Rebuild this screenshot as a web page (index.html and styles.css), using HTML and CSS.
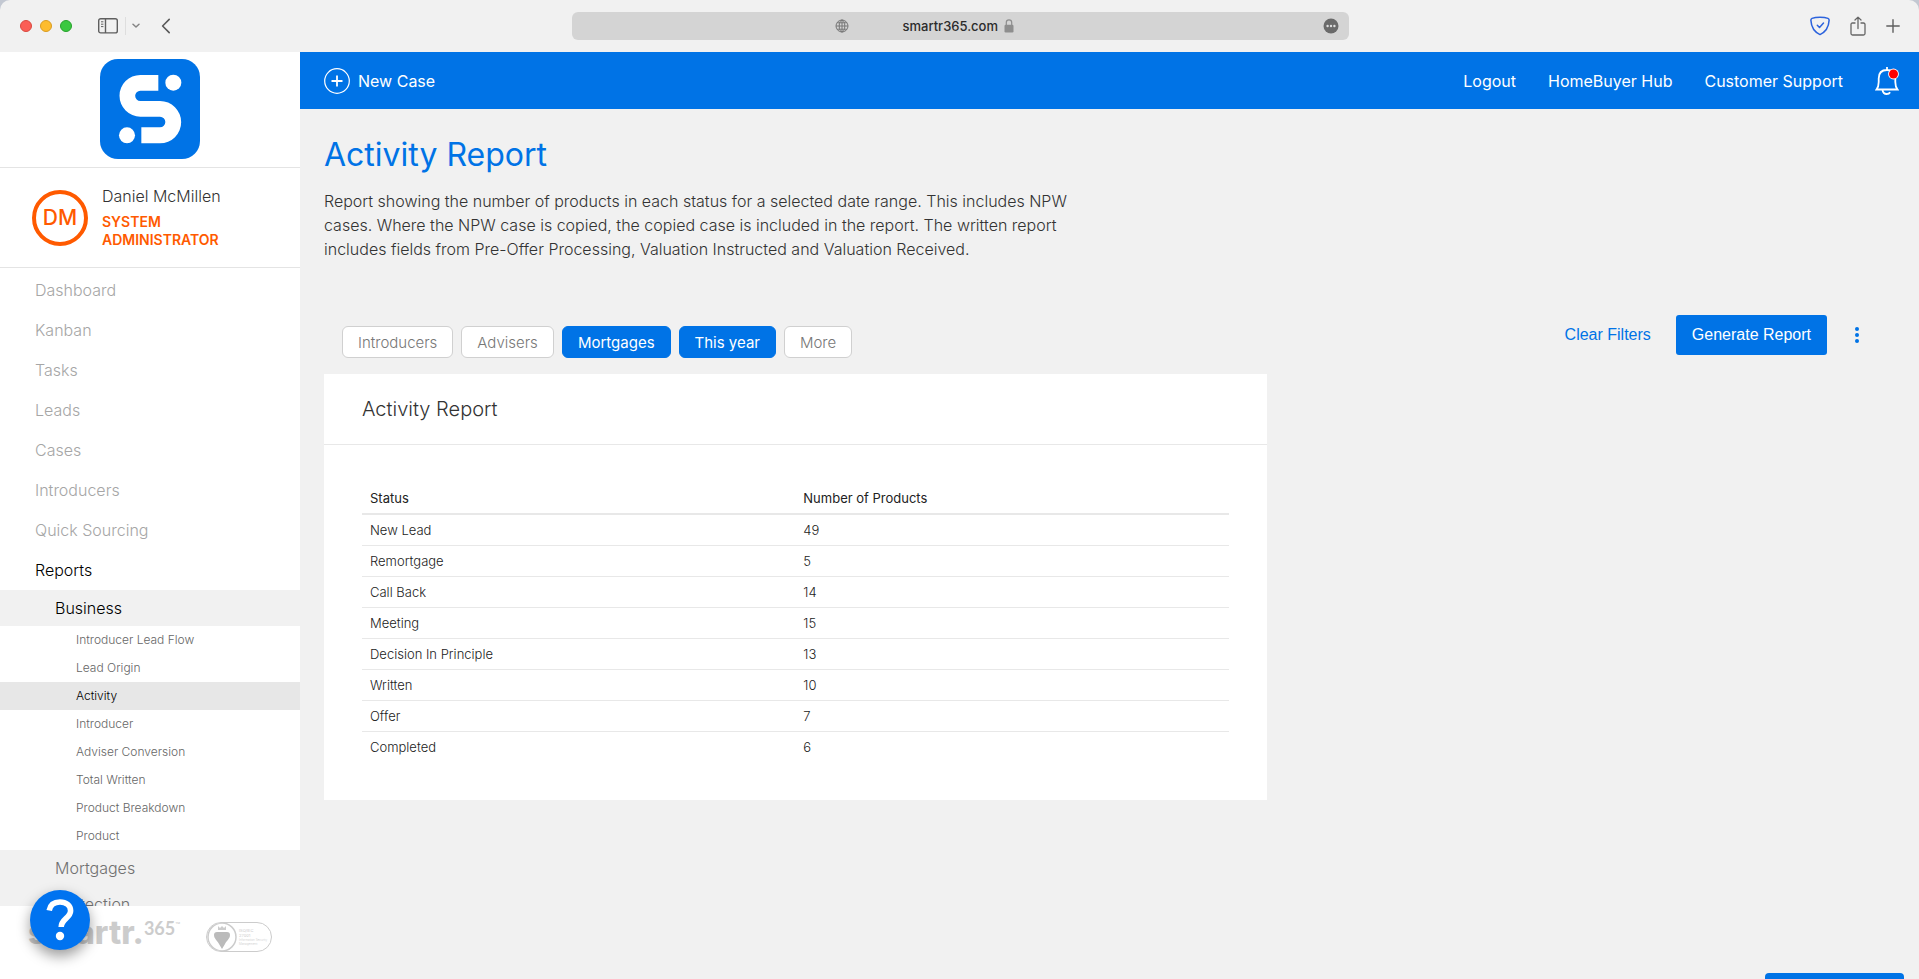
FILE: index.html
```html
<!DOCTYPE html>
<html lang="en">
<head>
<meta charset="utf-8">
<title>Activity Report</title>
<link rel="stylesheet" href="styles.css">
</head>
<body>
<div class="window">
  <div class="chrome">
    <div class="chrome-side">
      <span class="light light-red"></span>
      <span class="light light-yellow"></span>
      <span class="light light-green"></span>
      <button class="chrome-btn sidebar-btn" aria-label="Show sidebar">
        <svg width="20" height="16" viewBox="0 0 20 16" fill="none" stroke="#5f5f5f" stroke-width="1.4"><rect x=".7" y=".7" width="18.6" height="14.2" rx="2"/><path d="M7.5 1v14"/><path d="M3 3.8h2.4M3 6.2h2.4M3 8.6h2.4" stroke-width="1"/></svg>
      </button>
      <span class="chrome-divider"></span>
      <button class="chrome-btn" aria-label="Tab groups">
        <svg width="8" height="6" viewBox="0 0 8 6" fill="none" stroke="#858585" stroke-width="1.5" stroke-linecap="round" stroke-linejoin="round"><path d="M1 1.2l3 2.8 3-2.8"/></svg>
      </button>
      <button class="chrome-btn back-btn" aria-label="Back">
        <svg width="10" height="16" viewBox="0 0 10 16" fill="none" stroke="#5a5a5a" stroke-width="1.6" stroke-linecap="round" stroke-linejoin="round"><path d="M8.2 1.4L1.6 8l6.6 6.6"/></svg>
      </button>
    </div>
    <div class="address">
      <svg class="globe" width="14" height="14" viewBox="0 0 14 14" fill="none" stroke="#777" stroke-width="1"><circle cx="7" cy="7" r="6"/><ellipse cx="7" cy="7" rx="2.8" ry="6"/><path d="M1 7h12M7 1v12M2 3.8h10M2 10.2h10"/></svg>
      <span class="host">smartr365.com
        <svg width="10" height="14" viewBox="0 0 10 14"><path d="M2.3 6V3.6a2.7 2.7 0 0 1 5.4 0V6" fill="none" stroke="#8e8e8e" stroke-width="1.2"/><rect x=".5" y="5.8" width="9" height="7.6" rx="1.2" fill="#8e8e8e"/></svg>
      </span>
      <svg class="more-dots" width="16" height="16" viewBox="0 0 16 16"><circle cx="8" cy="8" r="7.5" fill="#6a6a6a"/><g fill="#ddd"><circle cx="4.6" cy="8" r="1.2"/><circle cx="8" cy="8" r="1.2"/><circle cx="11.4" cy="8" r="1.2"/></g></svg>
    </div>
    <div class="chrome-side chrome-right">
      <button class="chrome-btn" aria-label="Privacy">
        <svg width="20" height="20" viewBox="0 0 20 20" fill="none" stroke="#2c63dd" stroke-width="1.5" stroke-linecap="round" stroke-linejoin="round"><path d="M10 1.2c3 0 6 .4 8 1.2 1 .4 1.2.8 1.1 2C18.700 11.500 15.500 16 10 18.600 4.500 16 1.300 11.500.9 4.400.8 3.200 1 2.800 2 2.400 4 1.600 7 1.200 10 1.200z"/><path d="M7.300 9.300l2.200 2.200 4-4.400"/></svg>
      </button>
      <button class="chrome-btn" aria-label="Share">
        <svg width="16" height="20" viewBox="0 0 16 20" fill="none" stroke="#666" stroke-width="1.3" stroke-linecap="round" stroke-linejoin="round"><path d="M5 7H2.500Q1 7 1 8.500v9Q1 19 2.500 19h11q1.500 0 1.500-1.500v-9Q15 7 13.500 7H11M8 12.500V1.200M5 4l3-2.900L11 4"/></svg>
      </button>
      <button class="chrome-btn" aria-label="New tab">
        <svg width="14" height="14" viewBox="0 0 14 14" fill="none" stroke="#5f5f5f" stroke-width="1.4" stroke-linecap="round"><path d="M7 .8v12.400M.8 7h12.400"/></svg>
      </button>
    </div>
  </div>

  <div class="app">
    <aside class="sidebar">
      <div class="brand">
        <svg width="100" height="100" viewBox="0 0 300 300" role="img" aria-label="Smartr365"><rect width="300" height="300" rx="54" fill="#0073e6"/><path fill="#fff" d="M175 48H121A62.500 62.500 0 0 0 121 173H180A16 16 0 0 1 180 205H124V253H180A63.500 63.500 0 0 0 180 126H121A15.500 15.500 0 0 1 121 95H175Z"/><circle cx="220" cy="71" r="24" fill="#fff"/><circle cx="81" cy="229" r="24" fill="#fff"/></svg>
      </div>
      <div class="user">
        <span class="avatar">DM</span>
        <div>
          <div class="user-name">Daniel McMillen</div>
          <div class="user-role">SYSTEM ADMINISTRATOR</div>
        </div>
      </div>
      <nav class="nav">
        <a class="nav-item" href="#">Dashboard</a>
        <a class="nav-item" href="#">Kanban</a>
        <a class="nav-item" href="#">Tasks</a>
        <a class="nav-item" href="#">Leads</a>
        <a class="nav-item" href="#">Cases</a>
        <a class="nav-item" href="#">Introducers</a>
        <a class="nav-item" href="#">Quick Sourcing</a>
        <a class="nav-item current" href="#">Reports</a>
        <a class="nav-group current" href="#">Business</a>
        <a class="nav-sub" href="#">Introducer Lead Flow</a>
        <a class="nav-sub" href="#">Lead Origin</a>
        <a class="nav-sub active" href="#">Activity</a>
        <a class="nav-sub" href="#">Introducer</a>
        <a class="nav-sub" href="#">Adviser Conversion</a>
        <a class="nav-sub" href="#">Total Written</a>
        <a class="nav-sub" href="#">Product Breakdown</a>
        <a class="nav-sub" href="#">Product</a>
        <a class="nav-group" href="#">Mortgages</a>
        <a class="nav-group" href="#">Protection</a>
      </nav>
      <div class="side-foot">
        <div class="wordmark">smartr.<span class="wordmark-num">365</span><span class="wordmark-tm">™</span></div>
        <div class="iso">
          <svg width="30" height="30" viewBox="0 0 30 30"><circle cx="15" cy="15" r="14" fill="#fff" stroke="#ccc" stroke-width="1.500"/><path d="M7 13q0-3 3-3h10q3 0 3 3c0 4-4 6-5 9l-3 5-3-5c-1-3-5-5-5-9z" fill="#bbb"/><path d="M11 4l2 2 2-2 2 2 2-2v4h-8z" fill="#ccc"/></svg>
          <div class="iso-text"><b>ISO/IEC<br>27001</b><small>Information Security Management</small></div>
        </div>
      </div>
      <button class="help" aria-label="Help">
        <svg width="28" height="44" viewBox="0 0 28 44"><path d="M3.200 12.500C4.200 6.800 8.300 4 14 4c6.200 0 10.600 3.600 10.600 8.800 0 7.200-9.400 8.200-9.400 16.200" fill="none" stroke="#fff" stroke-width="5.600"/><circle cx="14" cy="38" r="4.200" fill="#fff"/></svg>
      </button>
    </aside>

    <main class="main">
      <header class="topbar">
        <button class="new-case">
          <svg width="26" height="26" viewBox="0 0 26 26" fill="none" stroke="#fff"><circle cx="13" cy="13" r="12.300" stroke-width="1.200"/><path d="M13 7.500v11M7.500 13h11" stroke-width="1.800"/></svg>
          New Case
        </button>
        <nav class="toplinks">
          <a href="#">Logout</a>
          <a href="#">HomeBuyer Hub</a>
          <a href="#">Customer Support</a>
          <button class="bell" aria-label="Notifications">
            <svg width="24" height="30" viewBox="0 0 24 30" fill="none" stroke="#fff" stroke-width="1.800"><path d="M12 1v3M1.500 23.500h21c-1.600-2-2.200-4-2.200-7.500V12.500C20.300 7 17 4 12 4S3.700 7 3.700 12.500V16c0 3.500-.6 5.500-2.200 7.500z"/><path d="M7.500 24c.4 2.600 2 4 4.200 4 1.500 0 2.700-.6 3.400-1.800"/><circle cx="18.500" cy="8" r="5.400" fill="#fff" stroke="none"/><circle cx="18.500" cy="8" r="4.500" fill="#f00" stroke="none"/></svg>
          </button>
        </nav>
      </header>

      <section class="content">
        <h1>Activity Report</h1>
        <p class="intro">Report showing the number of products in each status for a selected date range. This includes NPW cases. Where the NPW case is copied, the copied case is included in the report. The written report includes fields from Pre-Offer Processing, Valuation Instructed and Valuation Received.</p>

        <div class="filters">
          <div class="chips">
            <button class="chip">Introducers</button>
            <button class="chip">Advisers</button>
            <button class="chip on">Mortgages</button>
            <button class="chip on">This year</button>
            <button class="chip">More</button>
          </div>
          <div class="actions">
            <button class="clear">Clear Filters</button>
            <button class="generate">Generate Report</button>
            <button class="kebab" aria-label="More actions">
              <svg width="4" height="16" viewBox="0 0 4 16" fill="#0073e6"><circle cx="2" cy="2" r="2"/><circle cx="2" cy="8" r="2"/><circle cx="2" cy="14" r="2"/></svg>
            </button>
          </div>
        </div>

        <div class="card">
          <h2>Activity Report</h2>
          <div class="card-body">
            <table>
              <thead><tr><th scope="col">Status</th><th scope="col">Number of Products</th></tr></thead>
              <tbody>
                <tr><td>New Lead</td><td>49</td></tr>
                <tr><td>Remortgage</td><td>5</td></tr>
                <tr><td>Call Back</td><td>14</td></tr>
                <tr><td>Meeting</td><td>15</td></tr>
                <tr><td>Decision In Principle</td><td>13</td></tr>
                <tr><td>Written</td><td>10</td></tr>
                <tr><td>Offer</td><td>7</td></tr>
                <tr><td>Completed</td><td>6</td></tr>
              </tbody>
            </table>
          </div>
        </div>
      </section>
      <button class="drawer" aria-label="Open panel"></button>
    </main>
  </div>
</div>
</body>
</html>
```

FILE: styles.css
```css
* { box-sizing: border-box; }

body {
  margin: 0;
  background: #c3c8d2;
  font-family: Inter, "Liberation Sans", sans-serif;
  font-size: 16px;
  font-weight: 300;
  color: #333;
}

button {
  border: 0;
  padding: 0;
  background: none;
  font: inherit;
  color: inherit;
  cursor: pointer;
}

a { color: inherit; text-decoration: none; }
svg { display: block; }

.window {
  display: flex;
  flex-direction: column;
  height: 100vh;
  overflow: hidden;
  border-radius: 10px 10px 0 0;
  background: #f1f1f1;
}

/* Browser chrome */
.chrome {
  display: flex;
  align-items: center;
  flex: none;
  height: 52px;
  padding: 0 19px 0 20px;
}

.chrome-side { display: flex; align-items: center; flex: 1; }
.chrome-right { justify-content: flex-end; gap: 20px; }

.light {
  width: 12px;
  height: 12px;
  margin-right: 8px;
  border-radius: 50%;
  border: 1px solid;
}
.light-red { background: #fb5e56; border-color: #d9493f; }
.light-yellow { background: #fdbc2e; border-color: #d99c22; }
.light-green { background: #3ac840; border-color: #27a22c; }

.sidebar-btn { margin-left: 18px; }
.chrome-divider { width: 1px; height: 18px; margin: 0 6px 0 7px; background: #dedede; }
.back-btn { margin-left: 21px; }

.address {
  display: flex;
  align-items: center;
  justify-content: space-between;
  flex: none;
  width: 777px;
  height: 28px;
  padding: 0 10px 0 263px;
  border-radius: 6px;
  background: #d4d4d4;
}
.host {
  display: flex;
  align-items: center;
  gap: 6px;
  flex: 1;
  padding-left: 54px;
  font-size: 13px;
  font-weight: 500;
  color: #2b2b2b;
}

/* Shell */
.app { display: flex; flex: 1; min-height: 0; }

.sidebar {
  position: relative;
  display: flex;
  flex-direction: column;
  flex: none;
  width: 300px;
  background: #fff;
}

.brand {
  display: flex;
  justify-content: center;
  padding: 7px 0 8px;
  border-bottom: 1px solid #e4e4e4;
}

.user {
  display: flex;
  align-items: center;
  gap: 14px;
  height: 100px;
  padding: 0 32px;
  border-bottom: 1px solid #e4e4e4;
}
.avatar {
  display: flex;
  align-items: center;
  justify-content: center;
  flex: none;
  width: 56px;
  height: 56px;
  border: 4px solid #ff5a00;
  border-radius: 50%;
  font-size: 21px;
  font-weight: 500;
  color: #ff5a00;
}
.user-name { margin-bottom: 8px; line-height: 18px; }
.user-role { font-size: 14px; font-weight: 600; line-height: 18px; color: #ff5a00; }

.nav { flex: 1; min-height: 0; overflow: hidden; padding-top: 2px; }
.nav a { display: block; }
.nav-item { padding-left: 35px; line-height: 40px; color: #a6a6a6; }
.nav-group { padding-left: 55px; line-height: 36px; background: #f1f1f1; color: #707070; }
.nav-sub { padding-left: 76px; font-size: 12px; line-height: 28px; color: #666; }
.nav-item.current, .nav-group.current { color: #000; }
.nav-sub.active { background: #e7e7e7; color: #000; }

.side-foot {
  display: flex;
  align-items: flex-start;
  justify-content: space-between;
  height: 73px;
  padding: 9px 28px 0;
}
.wordmark {
  display: flex;
  align-items: flex-start;
  font-size: 32px;
  font-weight: 800;
  line-height: 36px;
  color: #ccc;
}
.wordmark-num { font-family: Lato, sans-serif; font-size: 18px; font-weight: 700; line-height: 26px; }
.wordmark-tm { font-size: 8px; font-weight: 400; line-height: 20px; }

.iso {
  display: flex;
  align-items: center;
  gap: 2px;
  width: 66px;
  height: 30px;
  margin-top: 7px;
  overflow: hidden;
  border: 1px solid #ccc;
  border-radius: 15px;
}
.iso svg { flex: none; }
.iso-text { font-size: 4px; line-height: 5px; color: #ccc; }
.iso-text small { display: block; font-size: 3px; line-height: 4px; }

.help {
  position: absolute;
  left: 30px;
  bottom: 29px;
  display: flex;
  align-items: center;
  justify-content: center;
  width: 60px;
  height: 60px;
  border-radius: 50%;
  background: #0073f0;
  box-shadow: 0 6px 14px rgba(0, 0, 0, .4);
}

.main {
  position: relative;
  flex: 1;
  min-width: 0;
  overflow: hidden;
}

.topbar {
  display: flex;
  align-items: center;
  justify-content: space-between;
  height: 57px;
  padding: 0 20px 0 24px;
  background: #0073e6;
  font-weight: 400;
  color: #fff;
}
.new-case { display: flex; align-items: center; gap: 8px; }
.toplinks { display: flex; align-items: center; gap: 32px; }

.content { padding: 24px; }

h1 {
  margin: 0;
  font-size: 32px;
  font-weight: 400;
  line-height: 44px;
  color: #0073e6;
}

.intro { max-width: 768px; margin: 12px 0 0; line-height: 24px; }

.filters {
  display: flex;
  justify-content: space-between;
  align-items: flex-start;
  margin-top: 54px;
  padding: 0 36px 0 18px;
}

.chips { display: flex; gap: 8px; padding-top: 11px; }
.chip {
  height: 32px;
  padding: 0 15px;
  border: 1px solid #d0d0d0;
  border-radius: 6px;
  background: #fff;
  font-size: 15px;
  color: #777;
}
.chip.on { border-color: #0073e6; background: #0073e6; font-weight: 400; color: #fff; }

.actions {
  display: flex;
  align-items: center;
  font-family: "Liberation Sans", Arial, sans-serif;
  font-size: 16px;
}
.clear { margin-right: 25px; color: #0073e6; }
.generate {
  height: 40px;
  padding: 0 16px;
  border-radius: 3px;
  background: #0073e6;
  color: #fff;
}
.kebab { margin-left: 28px; }

.card { width: 60%; margin-top: 16px; background: #fff; }
h2 {
  margin: 0;
  padding: 0 38px;
  border-bottom: 1px solid #e8e8e8;
  font-size: 20px;
  font-weight: 300;
  line-height: 70px;
}
.card-body { padding: 37px 38px 38px; }

table {
  width: 100%;
  border-collapse: collapse;
  font-size: 13px;
  table-layout: fixed;
  color: #222;
}
th, td { height: 31px; padding: 0 8px; text-align: left; }
th { height: 32px; font-weight: 400; color: #222; border-bottom: 2px solid #e8e8e8; }
td { border-bottom: 1px solid #e8e8e8; }
tbody tr:last-child td { border-bottom: 0; }

.drawer {
  position: absolute;
  right: 15px;
  bottom: -34px;
  width: 139px;
  height: 40px;
  border-radius: 4px;
  background: #0073e6;
}
```
